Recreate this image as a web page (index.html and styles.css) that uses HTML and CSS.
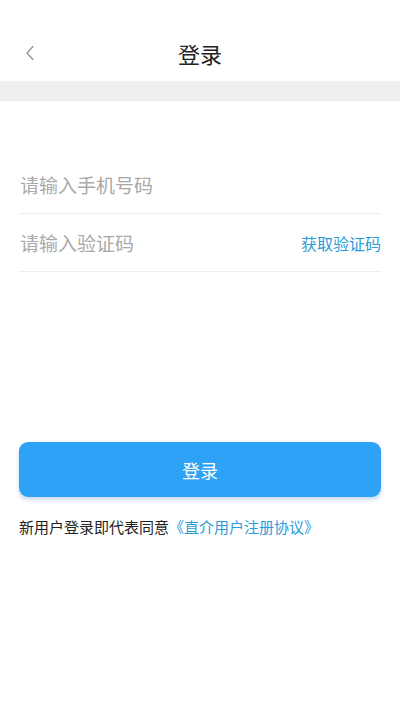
FILE: index.html
```html
<!DOCTYPE html>
<html lang="zh-CN">
<head>
<meta charset="utf-8">
<meta name="viewport" content="width=device-width, initial-scale=1">
<title>登录</title>
<link rel="stylesheet" href="styles.css">
</head>
<body>
<div class="page">
  <header class="nav">
    <button class="back" aria-label="返回">
      <svg width="10" height="16" viewBox="0 0 10 16"><path d="M8 1.5 L2 8 L8 14.5" fill="none" stroke="#9a9a9a" stroke-width="1.5" stroke-linecap="round" stroke-linejoin="round"/></svg>
    </button>
    <h1 class="title">登录</h1>
  </header>
  <div class="band"></div>
  <main class="form">
    <div class="field">
      <span class="placeholder">请输入手机号码</span>
    </div>
    <div class="field">
      <span class="placeholder">请输入验证码</span>
      <span class="code">获取验证码</span>
    </div>
    <button class="submit">登录</button>
    <p class="agree">新用户登录即代表同意<span class="link">《直介用户注册协议》</span></p>
  </main>
</div>
</body>
</html>
```
FILE: styles.css
```css
* { box-sizing: border-box; }
html, body { margin: 0; padding: 0; background: #fff; }
body { font-family: "Noto Sans CJK SC", "Noto Sans", sans-serif; }
.page { width: 400px; min-height: 711px; background: #fff; }
.nav {
  height: 81px;
  padding-top: 25px;
  display: flex;
  align-items: center;
  justify-content: center;
  position: relative;
}
.back {
  position: absolute;
  left: 25px;
  top: 45px;
  width: 12px;
  height: 16px;
  padding: 0;
  border: 0;
  background: none;
  display: flex;
}
.title {
  margin: 0;
  font-size: 22px;
  font-weight: 400;
  color: #222;
  line-height: 56px;
}
.band { height: 20px; background: #efefef; border-bottom: 1px solid #e9e9e9; }
.form { padding: 55px 19px 0; }
.field {
  height: 58px;
  border-bottom: 1px solid #eeeeee;
  display: flex;
  align-items: center;
  justify-content: space-between;
  padding-left: 1px;
}
.placeholder { font-size: 19px; color: #a9a9a9; }
.code { font-size: 16px; color: #2b9bd8; }
.submit {
  display: block;
  width: 100%;
  height: 55px;
  margin-top: 170px;
  border: 0;
  border-radius: 9px;
  background: #2ea2f6;
  color: #fff;
  font-family: inherit;
  font-size: 18px;
  box-shadow: 0 3px 4px rgba(46, 120, 200, 0.25);
}
.agree {
  margin: 19px 0 0;
  font-size: 15px;
  color: #222;
  line-height: 22px;
}
.link { color: #2b9bd8; }
```
